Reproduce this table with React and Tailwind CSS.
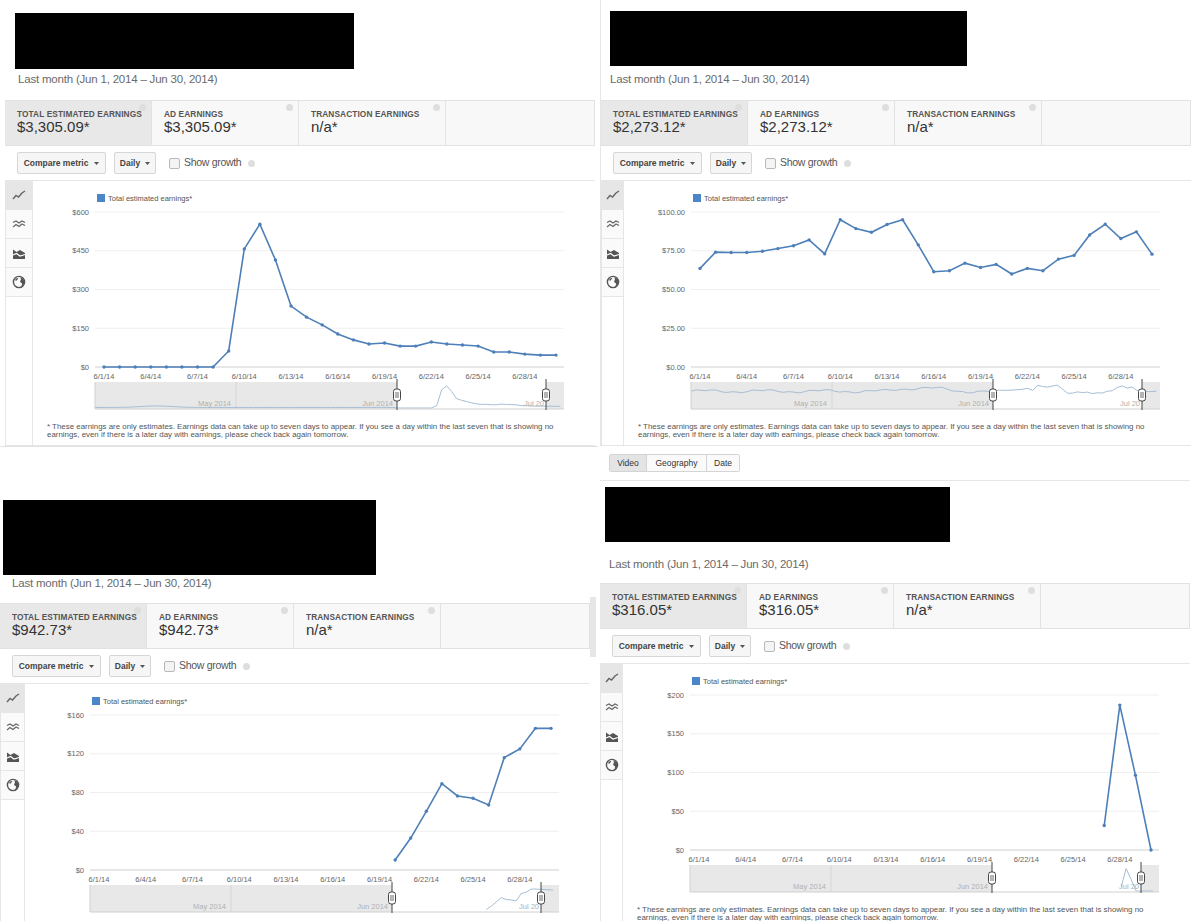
import React from "react";

const DAYS = 30;
// plot coordinates, measured from the left edge of a panel
const X0 = 90;
const X1 = 559;
const P0 = 99;
const P1 = 551;
const TOP = 31;
const BOT = 186;
const H1 = 392;
const H2 = 541;

const px = (i) => P0 + (i * (P1 - P0)) / (DAYS - 1);
const ticks = ["6/1/14", "6/4/14", "6/7/14", "6/10/14", "6/13/14", "6/16/14", "6/19/14", "6/22/14", "6/25/14", "6/28/14"];

const range = (n, f) => Array.from({ length: n }, (_, j) => f(j));

const panels = {
  topLeft: {
    value: "$3,305.09*",
    max: 600,
    yLabels: ["$600", "$450", "$300", "$150", "$0"],
    data: [0, 0, 0, 0, 0, 0, 0, 0, 62, 457, 553, 414, 236, 193, 163, 128, 105, 89, 93, 81, 81, 97, 89, 85, 81, 58, 58, 50, 46, 46],
    pre: range(59, (j) => 14 + 38 * Math.exp(-((j - 12) ** 2) / 18)),
    post: [44, 40],
  },
  topRight: {
    value: "$2,273.12*",
    max: 100,
    yLabels: ["$100.00", "$75.00", "$50.00", "$25.00", "$0.00"],
    data: [63.6, 74.1, 73.9, 73.9, 74.7, 76.4, 78.2, 82, 73, 95, 89.3, 86.9, 91.9, 95, 78.8, 61.5, 62.1, 67, 64.2, 66.2, 60, 63.6, 62.1, 69.6, 72, 85.2, 92.1, 82.9, 87.2, 72.8],
    pre: range(59, (j) => 70 + 5 * Math.sin(j * 0.55) + 3 * Math.sin(j * 1.7) + (j > 38 && j < 52 ? 14 * Math.sin(((j - 38) / 14) * Math.PI) : 0)),
    post: [68, 70],
  },
  bottomLeft: {
    value: "$942.73*",
    max: 160,
    yLabels: ["$160", "$120", "$80", "$40", "$0"],
    data: [...range(19, () => null), 10.3, 33, 60.6, 89.1, 76.4, 74, 67.1, 116, 125, 146.2, 146.2],
    pre: [],
    post: [140],
  },
  bottomRight: {
    value: "$316.05*",
    max: 200,
    yLabels: ["$200", "$150", "$100", "$50", "$0"],
    data: [...range(26, () => null), 31.6, 187, 96.6, 0],
    pre: [],
    post: [0],
  },
};

function Help({ className = "" }) {
  return <span className={`inline-block h-[7px] w-[7px] rounded-full bg-[#dedede] ${className}`} />;
}

function Caret() {
  return (
    <svg width="5" height="3" viewBox="0 0 5 3">
      <path d="M0 0h5L2.5 3z" fill="#555" />
    </svg>
  );
}

function LineIcon() {
  return (
    <svg width="14" height="10" viewBox="0 0 14 10">
      <polyline points="1,9 4,5.5 6.5,7 10,3 13,1" fill="none" stroke="#666" strokeWidth="1.4" />
    </svg>
  );
}

function MultiIcon() {
  return (
    <svg width="14" height="10" viewBox="0 0 14 10">
      <polyline points="1,3.5 4,2 7,4 10,2 13,3.5" fill="none" stroke="#666" strokeWidth="1.2" />
      <polyline points="1,8 4,5.5 7,7.5 10,5 13,6.5" fill="none" stroke="#666" strokeWidth="1.2" />
    </svg>
  );
}

function AreaIcon() {
  return (
    <svg width="14" height="11" viewBox="0 0 14 11">
      <path d="M1 1.5L4.5 4 8 2 13 5V11H1z" fill="#555" />
      <polyline points="1,7 4.5,5.5 8,8 13,6.5" fill="none" stroke="#fff" strokeWidth="1.2" />
    </svg>
  );
}

function GlobeIcon() {
  return (
    <svg width="14" height="14" viewBox="0 0 14 14">
      <circle cx="7" cy="7" r="5.6" fill="none" stroke="#555" strokeWidth="1.4" />
      <path d="M7.6 2.2C9 3 9.4 4.4 8.5 5.4 7.6 6.4 8.4 7.4 9.5 7.9 10.6 8.4 10.1 10.4 8.6 11.8 10.9 11.3 12.3 9.3 12.3 7 12.3 4.5 10.3 2.5 7.6 2.2Z" fill="#555" />
      <path d="M3 5C3.8 3.6 5.3 2.7 6.1 3.1 6.4 3.9 5.5 4.4 5 5.1 4.5 5.9 3.7 6 3 5Z" fill="#555" />
    </svg>
  );
}

function Chart({ p, colW }) {
  const py = (v) => BOT - (v / p.max) * (BOT - TOP);
  const ny = (v) => 227 - (v / p.max) * 24;
  const pts = p.data.map((v, i) => (v == null ? null : [px(i), py(v)])).filter(Boolean);

  const nav = [];
  p.pre.forEach((v, j) => nav.push([X0 + (j * (H1 - X0)) / p.pre.length, ny(v)]));
  p.data.forEach((v, i) => {
    if (v != null) nav.push([H1 + (i * (H2 - H1)) / DAYS, ny(v)]);
  });
  p.post.forEach((v, j) => nav.push([H2 + ((j + 1) * (X1 - H2)) / (p.post.length + 0.5), ny(v)]));

  const handle = (x) => (
    <g key={x}>
      <line x1={x} x2={x} y1={198} y2={229} stroke="#444" strokeWidth="1" />
      <rect x={x - 3.5} y={208} width={7} height={12} rx={2.5} fill="#fff" stroke="#444" />
      <line x1={x - 1} x2={x - 1} y1={211} y2={217} stroke="#444" strokeWidth="0.8" />
      <line x1={x + 1} x2={x + 1} y1={211} y2={217} stroke="#444" strokeWidth="0.8" />
    </g>
  );

  return (
    <svg width={590 - colW} height={230} className="block">
      <g transform={`translate(${-colW} 0)`}>
        <rect x={X0 + 2} y={13} width={8} height={8} fill="#4a86c8" />
        <text x={X0 + 13} y={20} fontSize="7.5" fill="#555">
          Total estimated earnings*
        </text>

        {p.yLabels.map((label, k) => {
          const y = TOP + (k * (BOT - TOP)) / 4;
          return (
            <g key={label}>
              <line x1={X0} x2={X1} y1={y} y2={y} stroke={k === 4 ? "#cfcfcf" : "#efefef"} />
              <text x={84} y={y + 2.5} textAnchor="end" fontSize="7.5" fill="#666">
                {label}
              </text>
            </g>
          );
        })}

        {ticks.map((t, k) => (
          <text key={t} x={px(k * 3)} y={198} textAnchor="middle" fontSize="7.5" fill="#666">
            {t}
          </text>
        ))}

        <polyline points={pts.map((q) => q.join(",")).join(" ")} fill="none" stroke="#4d7fb8" strokeWidth="1.6" />
        {pts.map(([x, y]) => (
          <circle key={x} cx={x} cy={y} r="1.7" fill="#4d7fb8" />
        ))}

        {/* navigator */}
        <rect x={X0} y={201} width={X1 - X0} height={27} fill="#fff" />
        <rect x={X0} y={201} width={H1 - X0} height={27} fill="#e8e8e8" />
        <rect x={H2} y={201} width={X1 - H2} height={27} fill="#e8e8e8" />
        <line x1={231} x2={231} y1={201} y2={228} stroke="#d6d6d6" />
        <polyline points={nav.map((q) => q.join(",")).join(" ")} fill="none" stroke="#a8bed4" strokeWidth="1" />
        <line x1={X0} x2={X1} y1={228} y2={228} stroke="#d0d0d0" />
        <line x1={X0} x2={X0} y1={201} y2={228} stroke="#d0d0d0" />
        <text x={226} y={225} textAnchor="end" fontSize="7.5" fill="#b0b0b0">
          May 2014
        </text>
        <text x={388} y={225} textAnchor="end" fontSize="7.5" fill="#b0b0b0">
          Jun 2014
        </text>
        <text x={539} y={225} textAnchor="end" fontSize="7.5" fill="#b0b0b0">
          Jul 20
        </text>
        {handle(H1)}
        {handle(H2)}
      </g>
    </svg>
  );
}

function Panel({ p, boxClass, textClass, metricsClass, colW, colClass, footnote = true }) {
  const cells = [
    ["TOTAL ESTIMATED EARNINGS", p.value],
    ["AD EARNINGS", p.value],
    ["TRANSACTION EARNINGS", "n/a*"],
  ];
  const icons = [LineIcon, MultiIcon, AreaIcon, GlobeIcon];

  return (
    <div className="w-[590px]">
      <div className={`bg-black ${boxClass}`} />
      <p className={`text-[11.5px] leading-[12px] tracking-[-0.2px] text-[#6a6a6a] ${textClass}`}>
        Last month (Jun 1, 2014 – Jun 30, 2014)
      </p>

      <div className={`flex h-[46px] border-y border-[#e2e2e2] ${metricsClass}`}>
        {cells.map(([label, val], i) => (
          <div
            key={label}
            className={`relative w-[147px] border-r border-[#e2e2e2] pl-[12px] pt-[8px] ${i === 0 ? "bg-[#e8e8e8]" : "bg-[#f8f8f8]"}`}
          >
            <div className="text-[8.3px] font-bold leading-[10px] tracking-[0.1px] text-[#555]">{label}</div>
            <div className="text-[15px] leading-[16px] text-[#333]">{val}</div>
            <Help className="absolute right-[5px] top-[3px]" />
          </div>
        ))}
        <div className="flex-1 border-r border-[#e2e2e2] bg-[#f8f8f8]" />
      </div>

      <div className="flex h-[35px] items-center border-b border-[#e6e6e6] pl-[12px]">
        <button className="flex h-[22px] w-[89px] items-center justify-center gap-[6px] rounded-[2px] border border-[#d6d6d6] bg-[#f6f6f6] text-[8.5px] font-bold text-[#444]">
          Compare metric <Caret />
        </button>
        <button className="ml-[8px] flex h-[22px] w-[42px] items-center justify-center gap-[5px] rounded-[2px] border border-[#d6d6d6] bg-[#f6f6f6] text-[8.5px] font-bold text-[#444]">
          Daily <Caret />
        </button>
        <span className="ml-[13px] h-[11px] w-[11px] rounded-[2px] border border-[#b8b8b8] bg-[#f4f4f4]" />
        <span className="ml-[4px] text-[10.5px] tracking-[-0.3px] text-[#555]">Show growth</span>
        <Help className="ml-[7px]" />
      </div>

      <div className="flex h-[265px] border-b border-[#e6e6e6]">
        <div className={`flex flex-col border-x border-[#e6e6e6] ${colClass}`}>
          {icons.map((Icon, k) => (
            <div
              key={k}
              className={`flex h-[29px] items-center justify-center border-b border-[#e6e6e6] ${k === 0 ? "bg-[#e6e6e6]" : "bg-[#fafafa]"}`}
            >
              <Icon />
            </div>
          ))}
        </div>
        <div className="flex flex-col">
          <Chart p={p} colW={colW} />
          {footnote && (
            <p className="ml-[14px] mt-[12px] text-[7.9px] leading-[8px] text-[#555]">
              * These earnings are only estimates. Earnings data can take up to seven days to appear. If you see a day within the last seven that is showing no
              <br />
              earnings, even if there is a later day with earnings, please check back again tomorrow.
            </p>
          )}
        </div>
      </div>
    </div>
  );
}

export default function App() {
  return (
    <div className="flex h-[921px] w-[1200px] overflow-hidden bg-white font-['Liberation_Sans',Arial,sans-serif]">
      <div className="flex w-[598px] flex-col">
        <div className="border-b border-[#e2e2e2] pl-[5px]">
          <Panel
            p={panels.topLeft}
            boxClass="ml-[10px] mt-[13px] h-[56px] w-[339px]"
            textClass="ml-[13px] mt-[4px]"
            metricsClass="mt-[15px]"
            colW={28}
            colClass="w-[28px]"
          />
        </div>
        <div className="flex">
          <Panel
            p={panels.bottomLeft}
            boxClass="ml-[3px] mt-[53px] h-[75px] w-[373px]"
            textClass="ml-[12px] mt-[2px]"
            metricsClass="mt-[14px]"
            colW={25}
            colClass="w-[25px]"
            footnote={false}
          />
          <div className="mt-[150px] h-[60px] w-[6px] bg-[#e6e6e6]" />
        </div>
      </div>

      <div className="flex w-[602px] flex-col pl-[2px]">
        <div className="border-l border-[#e6e6e6]">
          <Panel
            p={panels.topRight}
            boxClass="ml-[9px] mt-[11px] h-[55px] w-[357px]"
            textClass="ml-[9px] mt-[7px]"
            metricsClass="mt-[15px]"
            colW={23}
            colClass="w-[23px]"
          />
        </div>
        <div className="w-[590px] border-b border-[#e6e6e6] pb-[8px] pl-[9px] pt-[8px]">
          <div className="flex h-[18px] w-fit rounded-[2px] border border-[#d4d4d4] text-[8.5px] text-[#333]">
            <span className="flex w-[36px] items-center justify-center bg-[#e4e4e4]">Video</span>
            <span className="flex w-[60px] items-center justify-center border-l border-[#d4d4d4] bg-[#fafafa]">Geography</span>
            <span className="flex w-[33px] items-center justify-center border-l border-[#d4d4d4] bg-[#fafafa]">Date</span>
          </div>
        </div>
        <Panel
          p={panels.bottomRight}
          boxClass="ml-[5px] mt-[6px] h-[55px] w-[345px]"
          textClass="ml-[9px] mt-[16px]"
          metricsClass="mt-[13px]"
          colW={23}
          colClass="w-[23px]"
        />
      </div>
    </div>
  );
}
